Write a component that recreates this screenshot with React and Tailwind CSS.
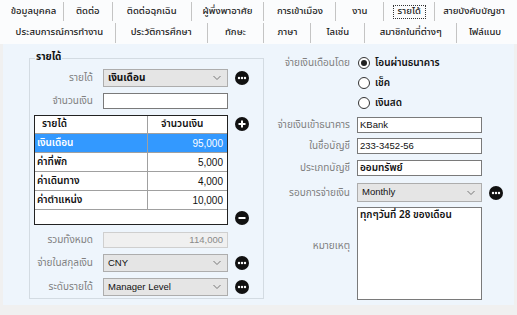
import React from 'react';

const font = { fontFamily: '"Noto Sans Thai", "Noto Sans", "DejaVu Sans", "Liberation Sans", sans-serif' };
const latin = { fontFamily: '"Liberation Sans", Arial, sans-serif' };

const tabsTop = [
  { label: 'ข้อมูลบุคคล', w: 'w-[59px]' },
  { label: 'ติดต่อ', w: 'w-[49px]' },
  { label: 'ติดต่อฉุกเฉิน', w: 'w-[79px]' },
  { label: 'ผู้พึ่งพาอาศัย', w: 'w-[73px]' },
  { label: 'การเข้าเมือง', w: 'w-[72px]' },
  { label: 'งาน', w: 'w-[48px]' },
  { label: 'รายได้', w: 'w-[51px]', active: true },
  { label: 'สายบังคับบัญชา', w: 'w-[79px]' },
];

const tabsBottom = [
  { label: 'ประสบการณ์การทำงาน', w: 'w-[111px]' },
  { label: 'ประวัติการศึกษา', w: 'w-[92px]' },
  { label: 'ทักษะ', w: 'w-[57px]' },
  { label: 'ภาษา', w: 'w-[47px]' },
  { label: 'ไลเซ่น', w: 'w-[54px]' },
  { label: 'สมาชิกในที่ต่างๆ', w: 'w-[92px]' },
  { label: 'ไฟล์แนบ', w: 'w-[57px]' },
];

const incomes = [
  { name: 'เงินเดือน', amount: '95,000', selected: true },
  { name: 'ค่าที่พัก', amount: '5,000' },
  { name: 'ค่าเดินทาง', amount: '4,000' },
  { name: 'ค่าตำแหน่ง', amount: '10,000' },
];

// round black buttons beside the fields
const CircleButton = ({ type = 'more' }) => (
  <svg width="14" height="14" viewBox="0 0 14 14" className="shrink-0">
    <circle cx="7" cy="7" r="7" fill="#111" />
    {type === 'more' && (
      <g fill="#fff">
        <circle cx="4" cy="7" r="1.2" />
        <circle cx="7" cy="7" r="1.2" />
        <circle cx="10" cy="7" r="1.2" />
      </g>
    )}
    {type === 'plus' && <path d="M3.5 7h7M7 3.5v7" stroke="#fff" strokeWidth="2" />}
    {type === 'minus' && <path d="M3.5 7h7" stroke="#fff" strokeWidth="2" />}
  </svg>
);

const Chevron = () => (
  <svg width="8" height="5" viewBox="0 0 8 5" className="absolute right-[6px] top-1/2 -translate-y-1/2">
    <path d="M0.5 0.5L4 4L7.5 0.5" fill="none" stroke="#777" strokeWidth="1" />
  </svg>
);

const Combo = ({ value, bold, h = 'h-[18px]' }) => (
  <div className={`relative w-[125px] ${h} bg-[#e5e5e5] border border-[#adadad] flex items-center pl-[4px] text-[#111] ${bold ? 'font-bold text-[10px]' : 'text-[9.5px]'}`}>
    <span style={bold ? font : latin}>{value}</span>
    <Chevron />
  </div>
);

const TextBox = ({ value = '', isLatin, bold, h = 'h-[16px]' }) => (
  <div className={`w-[125px] ${h} bg-white border border-[#7a7a7a] flex items-center pl-[2px] text-[#111] ${bold ? 'font-semibold' : ''} ${isLatin ? 'text-[9.5px]' : 'text-[10px]'}`}
    style={isLatin ? latin : font}>
    {value}
  </div>
);

const Label = ({ children, w = 'w-[63px]' }) => (
  <div className={`${w} shrink-0 text-right text-[10px] text-[#808080] leading-none whitespace-nowrap`}>{children}</div>
);

const Radio = ({ checked, label }) => (
  <div className="flex items-center h-[14px]">
    <span className="ml-[1px] w-[12px] h-[12px] rounded-full border border-[#333] bg-white flex items-center justify-center">
      {checked && <span className="w-[6px] h-[6px] rounded-full bg-[#222]" />}
    </span>
    <span className="ml-[5px] text-[10px] text-[#111] font-semibold leading-none">{label}</span>
  </div>
);

const Tab = ({ tab, first }) => (
  <div className={`${tab.w} h-full flex items-center justify-center text-[9.5px] font-medium text-[#222] ${first ? '' : 'border-l border-[#c4c4c4]'}`}>
    {tab.active ? (
      <span className="px-[4px] h-[14px] flex items-center border border-dotted border-[#333] leading-none">{tab.label}</span>
    ) : (
      <span className="leading-none">{tab.label}</span>
    )}
  </div>
);

const App = () => {
  return (
    <div className="w-[517px] h-[315px] bg-[#f0f0f0] overflow-hidden" style={font}>
      {/* tab strip */}
      <div className="h-[44px] bg-[#fbfcfd] px-[4px] pt-[2px]">
        <div className="flex h-[19px]">
          {tabsTop.map((t, i) => <Tab key={t.label} tab={t} first={i === 0} />)}
        </div>
        <div className="flex h-[20px] mt-[2px]">
          {tabsBottom.map((t, i) => <Tab key={t.label} tab={t} first={i === 0} />)}
        </div>
      </div>

      {/* tab page */}
      <div className="mx-[3px] h-[261px] bg-[#eef5fc] flex pl-[26px]">
        {/* group box */}
        <div className="relative mt-[14px] w-[235px] h-[241px] border border-[#d3dbe2] pt-[10px]">
          <span className="absolute left-[5px] -top-[7px] px-[1px] bg-[#eef5fc] text-[10px] font-bold text-[#111] leading-none">รายได้</span>

          <div className="flex items-center h-[18px]">
            <Label>รายได้</Label>
            <div className="ml-[10px]"><Combo value="เงินเดือน" bold /></div>
            <div className="ml-[7px]"><CircleButton /></div>
          </div>

          <div className="flex items-center mt-[6px]">
            <Label>จำนวนเงิน</Label>
            <div className="ml-[10px]"><TextBox /></div>
          </div>

          <div className="flex mt-[6px] ml-[4px]">
            <div className="w-[194px] h-[110px] border border-[#222] bg-white flex flex-col">
              <div className="flex h-[18px] border-b border-[#a0a0a0] text-[10px] font-semibold text-[#111]">
                <div className="w-[113px] border-r border-[#a0a0a0] flex items-center pl-[7px]">รายได้</div>
                <div className="flex-1 flex items-center pl-[13px]">จำนวนเงิน</div>
              </div>
              {incomes.map((r) => (
                <div key={r.name} className={`flex h-[19px] border-b border-[#a0a0a0] text-[10px] ${r.selected ? 'bg-[#3399ff] text-white' : 'text-[#111]'}`}>
                  <div className="w-[113px] border-r border-[#a0a0a0] flex items-center pl-[2px] font-semibold">{r.name}</div>
                  <div className="flex-1 flex items-center justify-end pr-[4px] text-[10px]" style={latin}>{r.amount}</div>
                </div>
              ))}
            </div>
            <div className="ml-[7px] flex flex-col justify-between pt-[2px]">
              <CircleButton type="plus" />
              <CircleButton type="minus" />
            </div>
          </div>

          <div className="flex items-center mt-[7px]">
            <Label>รวมทั้งหมด</Label>
            <div className="ml-[10px] w-[125px] h-[16px] bg-[#f0f0f0] border border-[#cfcfcf] flex items-center justify-end pr-[4px] text-[9.5px] text-[#8a8a8a]" style={latin}>
              114,000
            </div>
          </div>

          <div className="flex items-center mt-[6px]">
            <Label>จ่ายในสกุลเงิน</Label>
            <div className="ml-[10px]"><Combo value="CNY" /></div>
            <div className="ml-[7px]"><CircleButton /></div>
          </div>

          <div className="flex items-center mt-[6px]">
            <Label>ระดับรายได้</Label>
            <div className="ml-[10px]"><Combo value="Manager Level" /></div>
            <div className="ml-[7px]"><CircleButton /></div>
          </div>
        </div>

        {/* payment details */}
        <div className="pt-[12px]">
          <div className="flex items-center h-[14px]">
            <Label w="w-[86px]">จ่ายเงินเดือนโดย</Label>
            <div className="ml-[7px]"><Radio checked label="โอนผ่านธนาคาร" /></div>
          </div>
          <div className="flex items-center mt-[6px] pl-[93px]">
            <Radio label="เช็ค" />
          </div>
          <div className="flex items-center mt-[6px] pl-[93px]">
            <Radio label="เงินสด" />
          </div>

          <div className="flex items-center mt-[7px]">
            <Label w="w-[86px]">จ่ายเงินเข้าธนาคาร</Label>
            <div className="ml-[7px]"><TextBox value="KBank" isLatin /></div>
          </div>
          <div className="flex items-center mt-[5px]">
            <Label w="w-[86px]">ในชื่อบัญชี</Label>
            <div className="ml-[7px]"><TextBox value="233-3452-56" isLatin /></div>
          </div>
          <div className="flex items-center mt-[6px]">
            <Label w="w-[86px]">ประเภทบัญชี</Label>
            <div className="ml-[7px]"><TextBox value="ออมทรัพย์" bold /></div>
          </div>

          <div className="flex items-center mt-[7px]">
            <Label w="w-[86px]">รอบการจ่ายเงิน</Label>
            <div className="ml-[7px]"><Combo value="Monthly" h="h-[19px]" /></div>
            <div className="ml-[7px]"><CircleButton /></div>
          </div>

          <div className="flex items-start mt-[5px]">
            <div className="mt-[34px]"><Label w="w-[86px]">หมายเหตุ</Label></div>
            <div className="ml-[7px] w-[125px] h-[93px] bg-white border border-[#7a7a7a] pl-[2px] pt-[1px] text-[10px] font-semibold text-[#111] leading-[13px]">
              ทุกๆวันที่ 28 ของเดือน
            </div>
          </div>
        </div>
      </div>
    </div>
  );
};

export default App;
